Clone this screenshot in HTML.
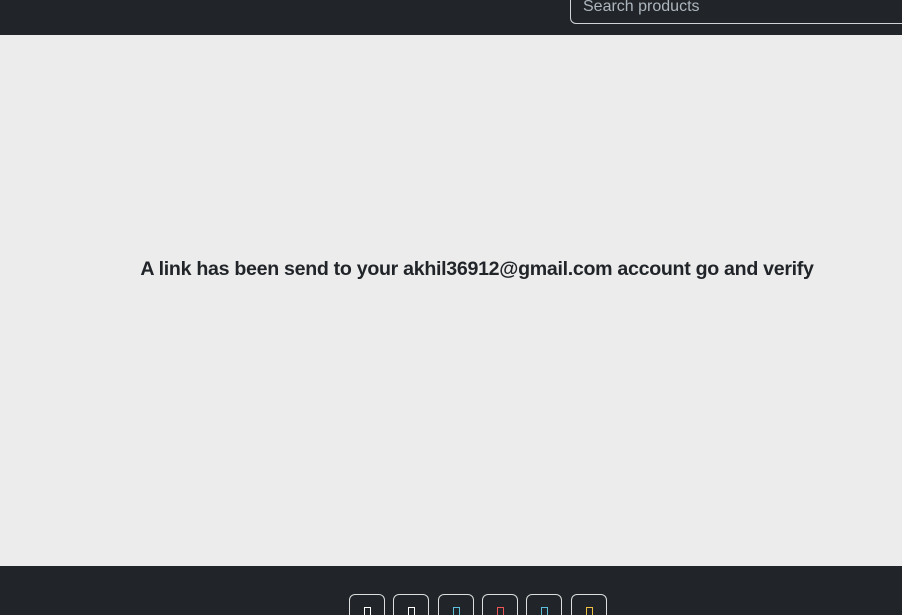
<!DOCTYPE html>
<html><head><style>
html,body{margin:0;width:902px;height:615px;overflow:hidden}
body{background:#ececec;font-family:"Liberation Sans",sans-serif;position:relative}
.hd{position:absolute;top:0;left:0;width:902px;height:35px;background:#212529}
.srch{position:absolute;left:570px;top:-10px;width:340px;height:34px;border:1px solid #ced4da;border-radius:6px;box-sizing:border-box;color:#adb5bd;font-size:16px;padding:6px 12px;line-height:20px}
.msg{position:absolute;top:258px;left:0;width:954px;text-align:center;font-size:19.6px;color:#212529;font-weight:bold;letter-spacing:-0.3px}
.ft{position:absolute;top:566px;left:0;width:902px;height:49px;background:#212529;overflow:hidden}
.b{position:absolute;top:28px;width:36px;height:40px;border:1px solid #ddd;border-radius:6px;box-sizing:border-box}
.b i{position:absolute;left:14px;top:12px;width:5px;height:9px;border:1px solid #fff}
</style></head><body>
<div class="hd"><div class="srch">Search products</div></div>
<div class="msg">A link has been send to your akhil36912@gmail.com account go and verify</div>
<div class="ft">
<div class="b" style="left:349px"><i></i></div>
<div class="b" style="left:393px"><i></i></div>
<div class="b" style="left:438px"><i style="border-color:#5bc0de"></i></div>
<div class="b" style="left:482px"><i style="border-color:#e55"></i></div>
<div class="b" style="left:526px"><i style="border-color:#5bc0de"></i></div>
<div class="b" style="left:571px"><i style="border-color:#f0c040"></i></div>
</div>
</body></html>
